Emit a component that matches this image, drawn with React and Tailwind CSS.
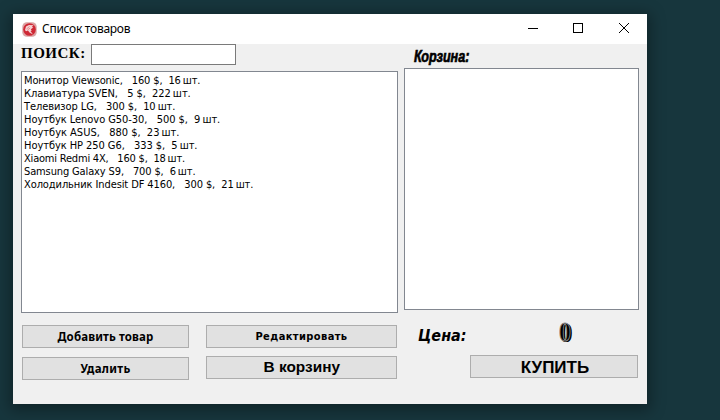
const products = [
  { name: 'Монитор Viewsonic', price: 160, count: '16', tracking: 'tracking-[-0.13px]' },
  { name: 'Клавиатура SVEN', price: 5, count: '222', tracking: 'tracking-[-0.05px]' },
  { name: 'Телевизор LG', price: 300, count: '10', tracking: 'tracking-[-0.08px]' },
  { name: 'Ноутбук Lenovo G50-30', price: 500, count: '9', tracking: 'tracking-[-0.05px]' },
  { name: 'Ноутбук ASUS', price: 880, count: '23', tracking: 'tracking-[-0.01px]' },
  { name: 'Ноутбук HP 250 G6', price: 333, count: '5', tracking: 'tracking-[-0.06px]' },
  { name: 'Xiaomi Redmi 4X', price: 160, count: '18', tracking: 'tracking-[-0.2px]' },
  { name: 'Samsung Galaxy S9', price: 700, count: '6', tracking: 'tracking-[-0.13px]' },
  { name: 'Холодильник Indesit DF 4160', price: 300, count: '21', tracking: 'tracking-[-0.1px]' },
];

function Button({ className, children }) {
  return (
    <button
      className={`flex h-[23px] items-center justify-center whitespace-nowrap border border-[#adadad] bg-[#e1e1e1] font-bold text-black ${className}`}
    >
      {children}
    </button>
  );
}

function TitleBar() {
  return (
    <header className="flex h-[30px] items-center bg-white pl-[9px]">
      <svg width="15" height="15" viewBox="0 0 15 15" className="shrink-0">
        <rect x="0.3" y="0.3" width="14.4" height="14.4" rx="4.5" fill="#dba4a5" />
        <circle cx="7.5" cy="7.5" r="6.3" fill="#cf2835" />
        <path d="M3 8 L4 4.5 L7 3 L11.5 3.2 L9.8 5 L11.3 5.6 L8.8 7.2 L9.8 8.6 L8.5 9 L11 12.5 L7.5 10.5 L6 8.5 L4 9.3 Z" fill="#f5d5d5" />
        <path d="M4.5 7 L7.5 4.5 M5.5 8 L8.2 6" stroke="#d95a62" strokeWidth="0.6" />
      </svg>
      <h1 className="ml-[5px] font-['Noto_Sans','Open_Sans',sans-serif] text-[12px] leading-[16px] tracking-[-0.28px] text-black">
        Список товаров
      </h1>
      <svg width="104" height="12" viewBox="0 0 104 12" className="ml-auto mr-[16px] mb-[2px]" fill="none" stroke="#000" shapeRendering="crispEdges">
        <path d="M1 6.5H11" />
        <rect x="46.5" y="1.5" width="9" height="9" />
        <path d="M92 1L102 11M102 1L92 11" shapeRendering="auto" />
      </svg>
    </header>
  );
}

export default function App() {
  return (
    <div className="h-[420px] w-[720px] overflow-hidden bg-[#17363d] pl-[13px] pt-[14px]">
      <main className="flex h-[390px] w-[634px] flex-col bg-[#f0f0f0] shadow-[0_3px_14px_3px_rgba(0,0,0,0.35)]">
        <TitleBar />
        <div className="flex pl-2">
          <section className="w-[377px]">
            <div className="flex h-[27px] items-start">
              <label className="w-[70px] whitespace-nowrap font-['Liberation_Serif',serif] text-[15px] font-bold leading-[18px] tracking-[0.5px]">
                ПОИСК:
              </label>
              <input className="h-[21px] w-[145px] border border-[#7a7a7a] bg-white outline-none" />
            </div>
            <ul className="h-[242px] border border-[#828790] bg-white pl-[2px] pt-[2px] font-['DejaVu_Sans_Condensed','DejaVu_Sans',sans-serif] font-stretch-condensed text-[11px] leading-[13px] text-black">
              {products.map((p) => (
                <li key={p.name} className={`h-[13px] whitespace-pre ${p.tracking}`}>
                  {`${p.name},   ${p.price} $,  ${p.count}`}
                  <span className="-ml-px">{' шт.'}</span>
                </li>
              ))}
            </ul>
            <div className="flex gap-[17px] pl-px pt-3">
              <div className="flex w-[167px] flex-col gap-[9px]">
                <Button className="pt-px font-['Noto_Sans',sans-serif] text-[11.5px] tracking-[0.12px]">Добавить товар</Button>
                <Button className="pt-px font-['Noto_Sans',sans-serif] text-[11.5px] tracking-[0.3px]">Удалить</Button>
              </div>
              <div className="flex w-[191px] flex-col gap-2">
                <Button className="pt-[2px] font-['DejaVu_Sans_Condensed','DejaVu_Sans',sans-serif] font-stretch-condensed text-[11px] tracking-[0.4px]">Редактировать</Button>
                <Button className="font-['Liberation_Sans',sans-serif] text-[14px]">
                  <span className="inline-block scale-x-110">В корзину</span>
                </Button>
              </div>
            </div>
          </section>
          <section className="ml-[6px] w-[235px]">
            <h2 className="h-[24px] whitespace-nowrap pl-[10px] pt-[3px] font-['Liberation_Sans',sans-serif] text-[17px] font-bold italic leading-[20px]">
              <span className="inline-block origin-left scale-x-[0.74] [-webkit-text-stroke:0.7px_#000]">Корзина:</span>
            </h2>
            <div className="h-[242px] border border-[#828790] bg-white" />
            <div className="flex h-[45px] items-start pl-[14px] pt-[14px]">
              <span className="w-[141px] whitespace-nowrap font-['DejaVu_Sans_Condensed','DejaVu_Sans',sans-serif] text-[16px] font-bold italic leading-[23px] tracking-[0px] font-stretch-condensed">Цена:</span>
              <span className="mt-[-5px] inline-block origin-left scale-x-[0.85] font-['Liberation_Serif',serif] text-[28px] font-bold leading-[25px] text-black [-webkit-text-stroke:1px_#8a8a8a] [text-shadow:1px_1px_0_#000,2px_1px_0_#000]">0</span>
            </div>
            <Button className="ml-[66px] w-[168px] pt-[2px] font-['Liberation_Sans',sans-serif] text-[17px]">
              <span className="inline-block translate-x-px">КУПИТЬ</span>
            </Button>
          </section>
        </div>
      </main>
    </div>
  );
}
